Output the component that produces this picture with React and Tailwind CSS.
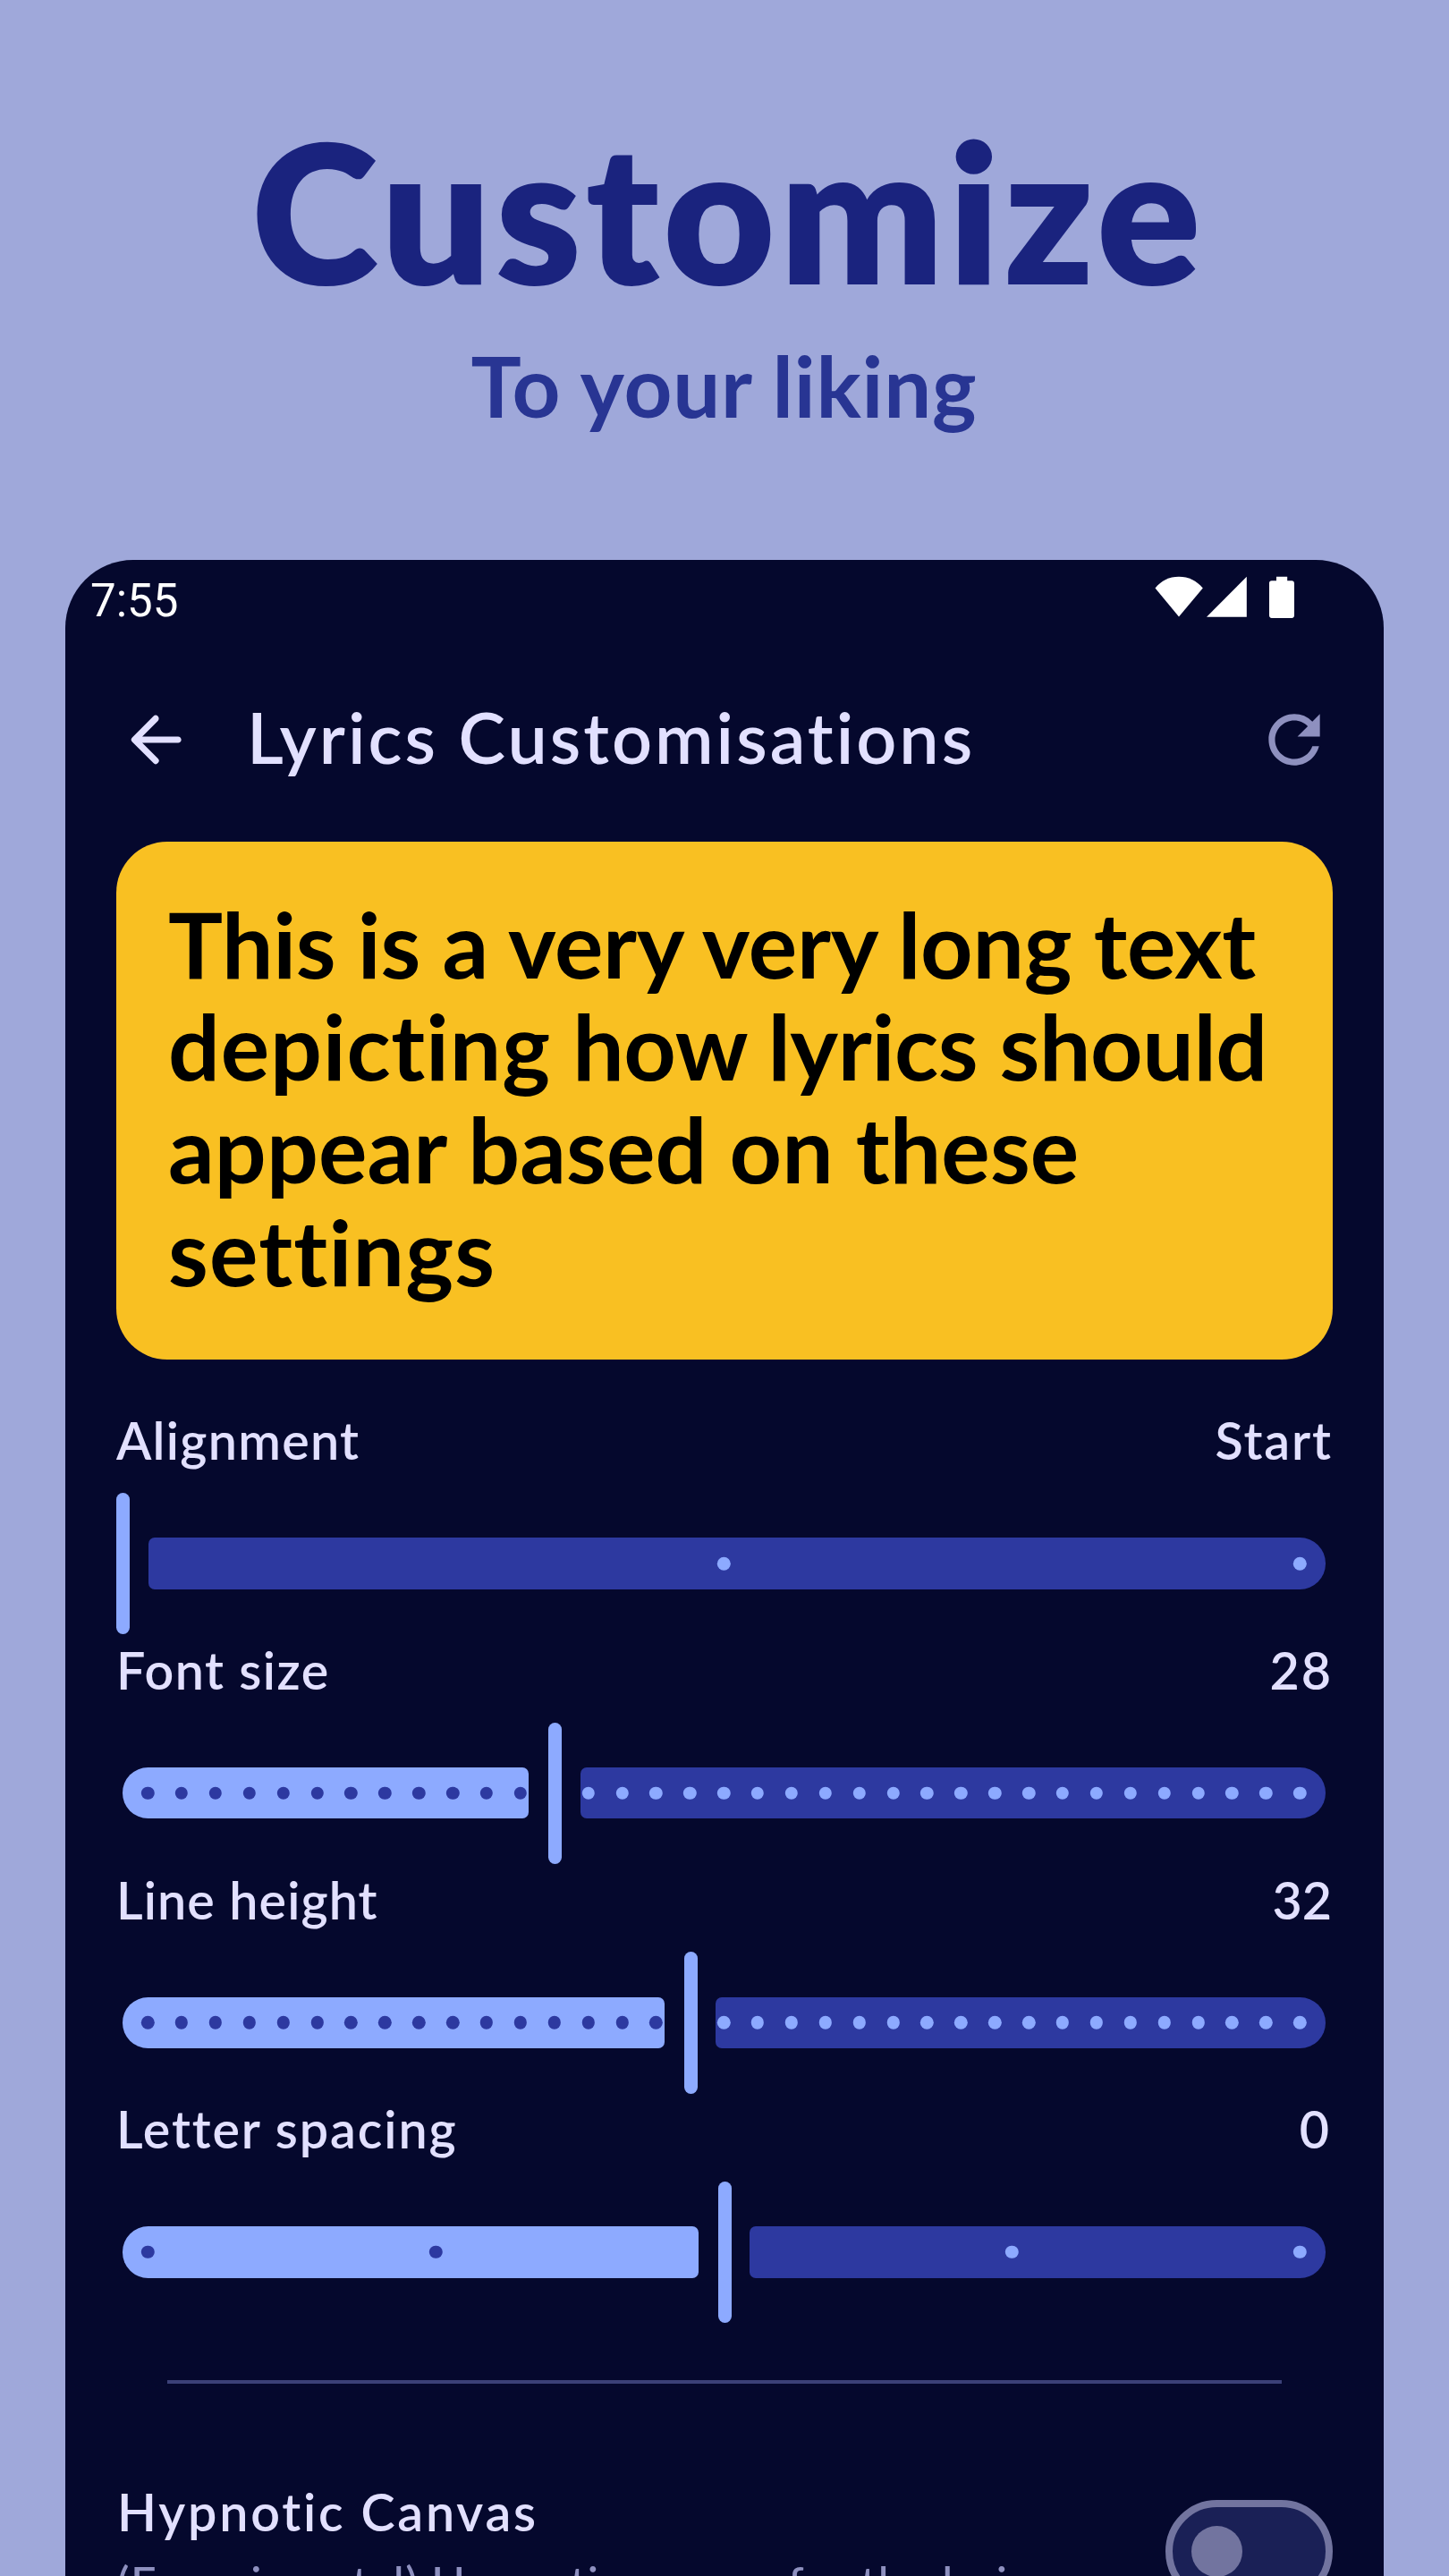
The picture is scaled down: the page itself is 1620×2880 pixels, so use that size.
const FIRST_STEP = 165.2;
const LAST_STEP = 1453.2;

function positions(steps) {
  return Array.from(
    { length: steps + 1 },
    (_, i) => FIRST_STEP + ((LAST_STEP - FIRST_STEP) * i) / steps
  );
}

function Dots({ xs, origin, className }) {
  return xs.map((x) => (
    <span
      key={x}
      className={`absolute top-1/2 size-[14.4px] -translate-1/2 rounded-full ${className}`}
      style={{ left: x - origin }}
    />
  ));
}

function Slider({ steps, value }) {
  const all = positions(steps);
  const thumb = 137.5 + (value / steps) * 1345;
  const activeEnd = thumb - 29.5;
  const inactiveStart = thumb + 28;
  const active = all.filter((x) => x + 7 < activeEnd);
  const inactive = all.filter((x) => x - 7 > inactiveStart - 1);
  return (
    <div className="mt-[23.5px] flex h-[158.4px] items-center">
      {value > 0 && (
        <div
          className="relative mr-[22px] ml-[6.5px] h-[57.4px] shrink-0 rounded-l-[28.7px] rounded-r-[7px] bg-[#8daaff]"
          style={{ width: activeEnd - 136.5 }}
        >
          <Dots xs={active} origin={136.5} className="bg-[#2d39a0]" />
        </div>
      )}
      <div className="h-full w-[15px] shrink-0 rounded-full bg-[#8daaff]" />
      <div className="relative mr-[8.5px] ml-[20.5px] h-[57.4px] flex-1 rounded-l-[7px] rounded-r-[28.7px] bg-[#2d39a0]">
        <Dots xs={inactive} origin={inactiveStart} className="bg-[#8daaff]" />
      </div>
    </div>
  );
}

function SliderRow({ label, labelClass, text, textClass, steps, value }) {
  return (
    <div className="h-[256.6px]">
      <div className="flex justify-between text-[57.4px] leading-[70px] font-semibold">
        <span className={labelClass}>{label}</span>
        <span className={textClass}>{text}</span>
      </div>
      <Slider steps={steps} value={value} />
    </div>
  );
}

export default function App() {
  return (
    <div className="flex h-[2880px] w-[1620px] flex-col overflow-hidden bg-[#9fa8da] font-['Lato',sans-serif]">
      <header className="h-[626px] shrink-0 pt-[124.5px] text-center">
        <h1 className="pl-[8px] text-[216px] leading-[220px] font-extrabold tracking-[4.7px] text-[#1a237e]">
          Customize
        </h1>
        <p className="mt-[38px] pr-[1px] text-[94px] leading-[95px] font-bold tracking-[0.8px] text-[#283593]">
          To your liking
        </p>
      </header>

      <main className="mx-[73px] flex h-[2300px] shrink-0 flex-col rounded-t-[76px] bg-[#05082d] px-[57px] text-[#e2e0ff]">
        <div className="-mx-[29px] flex h-[80px] justify-between pt-[16px] text-white">
          <span className="font-['Roboto',sans-serif] text-[51px] leading-[60px]">7:55</span>
          <svg className="mt-[2px] mr-[71.5px] h-[48px] w-[157px]" viewBox="0 0 157 48" fill="currentColor">
            <path d="M0.5 13.5C7.5 5 16 0.7 27 0.7S46.5 5 53.8 13.5L27 45.5Z" />
            <path d="M102.8 0.7V45.8H58Z" />
            <path d="M136 0.7h12.2v4.6h5.3a2.8 2.8 0 0 1 2.5 2.8v36a2.8 2.8 0 0 1-2.8 2.8h-22.4a2.8 2.8 0 0 1-2.8-2.8v-36a2.8 2.8 0 0 1 2.8-2.8h5.2z" />
          </svg>
        </div>

        <div className="mt-[78px] flex h-[86px]">
          <svg className="ml-[1px] size-[86px]" viewBox="0 0 24 24" fill="currentColor">
            <path d="M19 11H7.83l4.88-4.88c.39-.39.39-1.03 0-1.42a.996.996 0 0 0-1.41 0l-6.59 6.59a.996.996 0 0 0 0 1.41l6.59 6.59a.996.996 0 1 0 1.41-1.41L7.83 13H19c.55 0 1-.45 1-1s-.45-1-1-1z" />
          </svg>
          <h2 className="ml-[59px] text-[79px] leading-[80px] font-semibold tracking-[3px]">
            Lyrics Customisations
          </h2>
          <svg className="ml-auto size-[86px] text-[#8e90bf]" viewBox="0 0 24 24" fill="currentColor">
            <path d="M17.65 6.35A7.958 7.958 0 0 0 12 4c-4.42 0-7.99 3.58-7.99 8s3.57 8 7.99 8c3.73 0 6.84-2.55 7.73-6h-2.08A5.99 5.99 0 0 1 12 18c-3.31 0-6-2.69-6-6s2.69-6 6-6c1.66 0 3.14.69 4.22 1.78L13 11h7V4l-2.35 2.35z" />
          </svg>
        </div>

        <div className="mt-[70.7px] h-[579px] shrink-0 rounded-[57px] bg-[#f9c022] px-[58px] py-[57px] text-[102px] leading-[114.7px] font-bold whitespace-nowrap text-black [font-variant-ligatures:none]">
          <div className="tracking-[-0.3px]">This is a very very long text</div>
          <div className="tracking-[-0.4px]">
            <span className="tracking-[0.8px]">depicting</span> how lyrics should
          </div>
          <div className="tracking-[0.1px]">appear based on these</div>
          <div className="tracking-[1.2px]">settings</div>
        </div>

        <div className="mt-[55.8px]">
          <SliderRow label="Alignment" labelClass="tracking-[1.3px]" text="Start" textClass="tracking-[1.9px]" steps={2} value={0} />
          <SliderRow label="Font size" labelClass="tracking-[1.5px]" text="28" textClass="tracking-[2px]" steps={34} value={12.22} />
          <SliderRow label="Line height" labelClass="tracking-[1.1px]" text="32" textClass="pr-[1px] tracking-[0px]" steps={34} value={16.05} />
          <SliderRow label="Letter spacing" labelClass="tracking-[1.9px]" text="0" textClass="tracking-[4px]" steps={4} value={2} />
        </div>

        <div className="mx-[57px] mt-[59.4px] h-[4px] shrink-0 bg-[#3b4078]" />

        <div className="mt-[108px] flex justify-between">
          <div className="whitespace-nowrap">
            <div className="pl-[1px] text-[57.4px] leading-[70px] font-semibold tracking-[2.8px]">Hypnotic Canvas</div>
            <div className="mt-[14px] pl-[1px] text-[50.2px] leading-[60px] font-medium tracking-[1.38px] text-[#8e90bf]">
              (Experimental) Hypnotic canvas for the lyrics
            </div>
          </div>
          <div className="mt-[22px] flex h-[114.7px] w-[187px] items-center rounded-full border-[8px] border-[#72749f] bg-[#1a2056] pl-[21px]">
            <div className="size-[57.4px] rounded-full bg-[#72749f]" />
          </div>
        </div>
      </main>
    </div>
  );
}
